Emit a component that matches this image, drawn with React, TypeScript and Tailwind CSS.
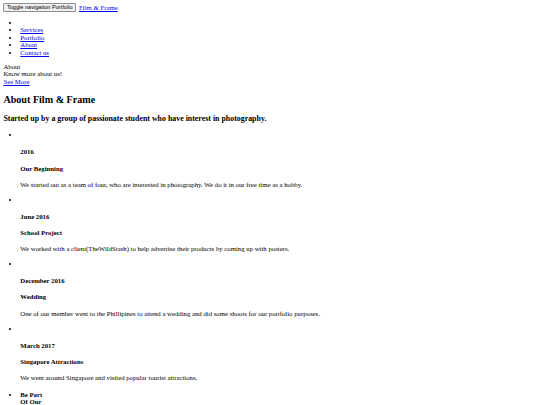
const timeline = [
  {
    date: '2016',
    title: 'Our Beginning',
    text: 'We started out as a team of four, who are interested in photography. We do it in our free time as a hobby.',
  },
  {
    date: 'June 2016',
    title: 'School Project',
    text: 'We worked with a client(TheWildStash) to help advertise their products by coming up with posters.',
  },
  {
    date: 'December 2016',
    title: 'Wedding',
    text: 'One of our member went to the Phillipines to attend a wedding and did some shoots for our portfolio purposes.',
  },
  {
    date: 'March 2017',
    title: 'Singapore Attractions',
    text: 'We went around Singapore and visited popular tourist attractions.',
  },
];

const navLinks = ['Services', 'Portfolio', 'About', 'Contact us'];

export default function App() {
  return (
    <div className="min-h-[405px] bg-white px-[3.4px] pt-[3px] font-['Liberation_Serif',serif] text-[6.75px] leading-[7.65px] text-black">
      {/* Navbar (unstyled) */}
      <nav>
        <div className="flex items-center gap-[3px]">
          <button className="h-[9px] rounded-[1px] border border-[#8f8f8f] bg-[#efefef] px-[2.5px] font-['Liberation_Sans',sans-serif] text-[5.6px] leading-[7px] text-black">
            Toggle navigation Portfolio
          </button>
          <a href="#" className="text-[#0000ee] underline">
            Film &amp; Frame
          </a>
        </div>
        <ul className="mt-[6.6px] list-disc pl-[16.9px] leading-[7.5px]">
          <li>&nbsp;</li>
          {navLinks.map((link) => (
            <li key={link}>
              <a href="#" className="text-[#0000ee] underline">
                {link}
              </a>
            </li>
          ))}
        </ul>
      </nav>

      {/* Header */}
      <header className="mt-[6.6px]">
        <div>About</div>
        <div>Know more about us!</div>
        <a href="#" className="text-[#0000ee] underline">
          See More
        </a>
      </header>

      {/* About section */}
      <section>
        <h2 className="mt-[8.8px] mb-[8.4px] text-[10.125px] leading-[11.6px] font-bold">
          About Film &amp; Frame
        </h2>
        <h3 className="mb-[7.9px] text-[7.9px] leading-[9.1px] font-bold">
          Started up by a group of passionate student who have interest in photography.
        </h3>
        <ul className="list-disc pl-[16.9px]">
          {timeline.map((item) => (
            <li key={item.date}>
              <div>&nbsp;</div>
              <div>
                <h4 className="mt-[9.4px] font-bold">{item.date}</h4>
                <h4 className="mt-[8.5px] font-bold">{item.title}</h4>
                <p className="mt-[8.6px] mb-[7.3px]">{item.text}</p>
              </div>
            </li>
          ))}
          <li>
            <h4 className="mt-[9px] font-bold">
              Be Part
              <br />
              Of Our
            </h4>
          </li>
        </ul>
      </section>
    </div>
  );
}
